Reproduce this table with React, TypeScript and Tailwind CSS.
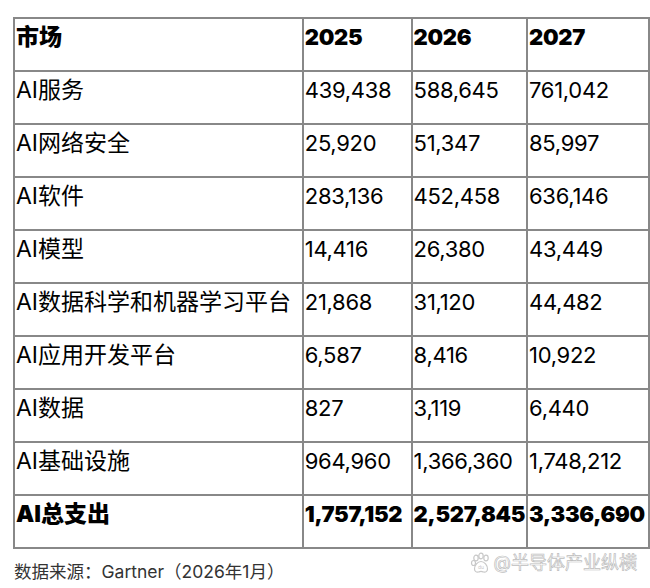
const rows: [string, string, string, string][] = [
  ['AI服务', '439,438', '588,645', '761,042'],
  ['AI网络安全', '25,920', '51,347', '85,997'],
  ['AI软件', '283,136', '452,458', '636,146'],
  ['AI模型', '14,416', '26,380', '43,449'],
  ['AI数据科学和机器学习平台', '21,868', '31,120', '44,482'],
  ['AI应用开发平台', '6,587', '8,416', '10,922'],
  ['AI数据', '827', '3,119', '6,440'],
  ['AI基础设施', '964,960', '1,366,360', '1,748,212'],
];

const font = { fontFamily: 'Inter, "Noto Sans CJK SC", sans-serif' };

function Cell({ children, bold, label }: { children: React.ReactNode; bold?: boolean; label?: boolean }) {
  return (
    <td
      className={`h-[53px] border-2 border-[#888] px-[1px] pt-[4px] align-top leading-[28px] whitespace-nowrap text-black ${
        label ? 'text-[23px] tracking-[0px]' : 'text-[22px] tracking-[-0.3px]'
      } ${bold ? 'font-black' : 'font-normal'}`}
    >
      {children}
    </td>
  );
}

function Paw() {
  return (
    <svg width="22" height="22" viewBox="0 0 22 22" fill="none" stroke="#c8c8c8" strokeWidth="1.2">
      <ellipse cx="6" cy="6" rx="2.2" ry="2.8" />
      <ellipse cx="11" cy="4" rx="2.2" ry="2.8" />
      <ellipse cx="16" cy="6" rx="2.2" ry="2.8" />
      <ellipse cx="3.5" cy="11" rx="2" ry="2.5" />
      <path d="M11 9.5c-3.5 0-6.5 4-6.5 7.5 0 2.5 2 3.5 4 3 1-.3 1.8-.6 2.5-.6s1.5.3 2.5.6c2 .5 4-.5 4-3 0-3.5-3-7.5-6.5-7.5z" />
      <text x="8" y="17" fontSize="5" fill="#c8c8c8" stroke="none" fontFamily="Inter, sans-serif">du</text>
    </svg>
  );
}

export default function App() {
  return (
    <div className="relative h-[588px] w-[650px] overflow-hidden bg-white" style={font}>
      <table className="ml-[13px] mt-[17px] border-collapse table-fixed">
        <colgroup>
          <col className="w-[289px]" />
          <col className="w-[109px]" />
          <col className="w-[113px]" />
          <col className="w-[122px]" />
        </colgroup>
        <tbody>
          <tr>
            <Cell bold label>市场</Cell>
            <Cell bold>2025</Cell>
            <Cell bold>2026</Cell>
            <Cell bold>2027</Cell>
          </tr>
          {rows.map((r) => (
            <tr key={r[0]}>
              {r.map((c, i) => (
                <Cell key={i} label={i === 0}>
                  {c}
                </Cell>
              ))}
            </tr>
          ))}
          <tr>
            <Cell bold label>AI总支出</Cell>
            <Cell bold>1,757,152</Cell>
            <Cell bold>2,527,845</Cell>
            <Cell bold>3,336,690</Cell>
          </tr>
        </tbody>
      </table>
      <div className="ml-[14px] mt-[12px] text-[17.5px] leading-[22px] text-[#333]">数据来源：Gartner（2026年1月）</div>
      <div className="absolute right-[13px] top-[552px] flex items-center gap-[2px] whitespace-nowrap">
        <Paw />
        <span className="text-[18px] leading-[22px] text-white [-webkit-text-stroke:0.7px_#bdbdbd]">@半导体产业纵横</span>
      </div>
    </div>
  );
}
